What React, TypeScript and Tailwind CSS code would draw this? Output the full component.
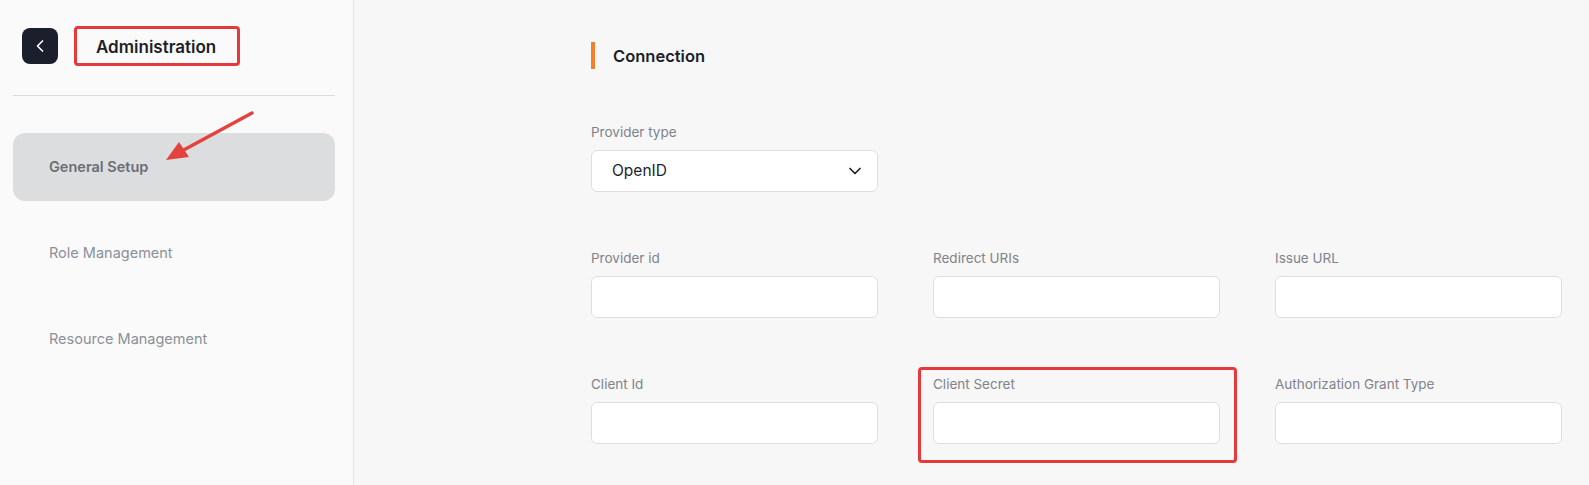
import React from "react";
import { ChevronLeft, ChevronDown } from "lucide-react";

const Field = ({ label }: { label: string }) => (
  <div>
    <p className="text-[13.5px] leading-5 text-[#80838b]">{label}</p>
    <div className="mt-[8px] h-[42px] rounded-[6px] border border-[#dedede] bg-white" />
  </div>
);

const App = () => {
  const nav = ["General Setup", "Role Management", "Resource Management"];

  return (
    <div className="flex h-[485px] w-full font-['Inter',sans-serif] text-[#1c1f2a]">
      {/* Sidebar */}
      <aside className="relative w-[354px] shrink-0 border-r border-[#e3e3e3] bg-[#fafafa]">
        <div className="flex items-center pl-[22px] pt-[26px]">
          <button className="flex h-9 w-9 items-center justify-center rounded-[8px] bg-[#1b1e2b] text-white">
            <ChevronLeft className="h-5 w-5" strokeWidth={2} />
          </button>
          <div className="ml-4 flex h-10 w-[166px] items-center rounded-[4px] border-[3px] border-[#e5393b] pl-[19px] pt-[3px] text-[17px] font-semibold">
            Administration
          </div>
        </div>

        <div className="ml-[13px] mr-[18px] mt-[29px] border-t border-[#dcdcdc]" />

        <nav className="mt-[37px] flex flex-col gap-[18px] pl-[13px] pr-[18px]">
          {nav.map((item, i) => (
            <div
              key={item}
              className={`flex h-[68px] items-center rounded-[12px] pl-9 text-[14.5px] ${
                i === 0
                  ? "bg-[#dcdddf] font-semibold text-[#6b6e75]"
                  : "text-[#8b9099]"
              }`}
            >
              {item}
            </div>
          ))}
        </nav>

        {/* annotation arrow */}
        <svg
          className="absolute left-0 top-0"
          width="354"
          height="200"
          viewBox="0 0 354 200"
        >
          <line x1="252" y1="113" x2="180" y2="152" stroke="#e4423f" strokeWidth="3.5" strokeLinecap="round" />
          <polygon points="166,160 179,142 189,157" fill="#e4423f" />
        </svg>
      </aside>

      {/* Main */}
      <main className="flex-1 bg-[#f7f7f7] pl-[237px] pt-[42px]">
        <div className="flex h-[27px] items-center border-l-4 border-[#f47f2b] pl-[18px] pt-[2px] text-[16.5px] font-semibold">
          Connection
        </div>

        <div className="mt-[53px] w-[287px]">
          <p className="text-[13.5px] leading-5 text-[#80838b]">Provider type</p>
          <div className="mt-[8px] flex h-[42px] items-center justify-between rounded-[6px] border border-[#dedede] bg-white pl-5 pr-3 text-[15.5px]">
            <span>OpenID</span>
            <ChevronDown className="h-5 w-5" strokeWidth={2} />
          </div>
        </div>

        <div className="mt-[56px] grid w-[971px] grid-cols-3 gap-x-[55px] gap-y-[56px]">
          <Field label="Provider id" />
          <Field label="Redirect URIs" />
          <Field label="Issue URL" />
          <Field label="Client Id" />
          <div className="relative">
            <Field label="Client Secret" />
            <div className="pointer-events-none absolute -bottom-[19px] -left-[15px] -right-[17px] -top-[7px] rounded-[4px] border-[3px] border-[#e5393b]" />
          </div>
          <Field label="Authorization Grant Type" />
        </div>
      </main>
    </div>
  );
};

export default App;
